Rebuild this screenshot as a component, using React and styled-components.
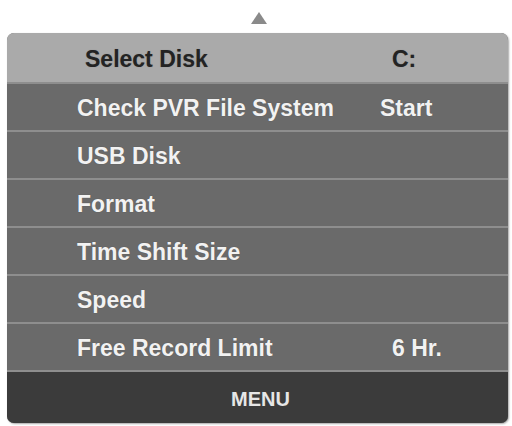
import styled, { createGlobalStyle } from "styled-components";

const GlobalStyle = createGlobalStyle`
  html, body {
    margin: 0;
    padding: 0;
    background: #ffffff;
  }
  body {
    font-family: "Liberation Sans", Arial, sans-serif;
  }
`;

const rows = [
  { label: "Check PVR File System", value: "Start", valueIndent: 0 },
  { label: "USB Disk" },
  { label: "Format" },
  { label: "Time Shift Size" },
  { label: "Speed" },
  { label: "Free Record Limit", value: "6 Hr.", valueIndent: 12 },
];

const App = () => {
  return (
    <Page>
      <GlobalStyle />
      <ArrowArea>
        <svg width="16" height="12" viewBox="0 0 16 12">
          <polygon points="8,0 16,12 0,12" fill="#8a8a8a" />
        </svg>
      </ArrowArea>
      <Panel>
        <HeaderRow>
          <Label $indent={8}>Select Disk</Label>
          <Value $indent={12}>C:</Value>
        </HeaderRow>
        {rows.map((row) => (
          <Row key={row.label}>
            <Label>{row.label}</Label>
            {row.value && <Value $indent={row.valueIndent}>{row.value}</Value>}
          </Row>
        ))}
        <MenuBar>MENU</MenuBar>
      </Panel>
    </Page>
  );
};

export default App;

const Page = styled.div`
  width: 512px;
  height: 426px;
  display: flex;
  flex-direction: column;
  overflow: hidden;
`;

const ArrowArea = styled.div`
  height: 33px;
  display: flex;
  justify-content: center;
  align-items: flex-start;
  padding-top: 12px;
  padding-left: 6px;
  box-sizing: border-box;

  svg {
    display: block;
  }
`;

const Panel = styled.div`
  margin-left: 7px;
  width: 501px;
  border-radius: 7px;
  overflow: hidden;
  display: flex;
  flex-direction: column;
  background: #6a6a6a;
  box-shadow: 1px 1px 2px rgba(0, 0, 0, 0.35);
`;

const Row = styled.div`
  height: 48px;
  box-sizing: border-box;
  display: grid;
  grid-template-columns: 303px 1fr;
  align-items: center;
  padding-left: 70px;
  padding-top: 3px;
  background: #6a6a6a;
  color: #f2f2f2;
  border-top: 2px solid #8e8e8e;
`;

const HeaderRow = styled(Row)`
  height: 49px;
  border-top: none;
  background: #aaaaaa;
  color: #232323;
`;

const Label = styled.span`
  font-size: 23px;
  font-weight: 700;
  padding-left: ${(p) => p.$indent || 0}px;
  white-space: nowrap;
  text-shadow: 0 0 1px rgba(0, 0, 0, 0.25);
`;

const Value = styled(Label)``;

const MenuBar = styled.div`
  height: 53px;
  box-sizing: border-box;
  display: flex;
  align-items: center;
  justify-content: center;
  padding-left: 6px;
  padding-top: 4px;
  background: #3b3b3b;
  color: #e6e6e6;
  font-size: 20px;
  font-weight: 700;
  border-top: 2px solid #8e8e8e;
`;
